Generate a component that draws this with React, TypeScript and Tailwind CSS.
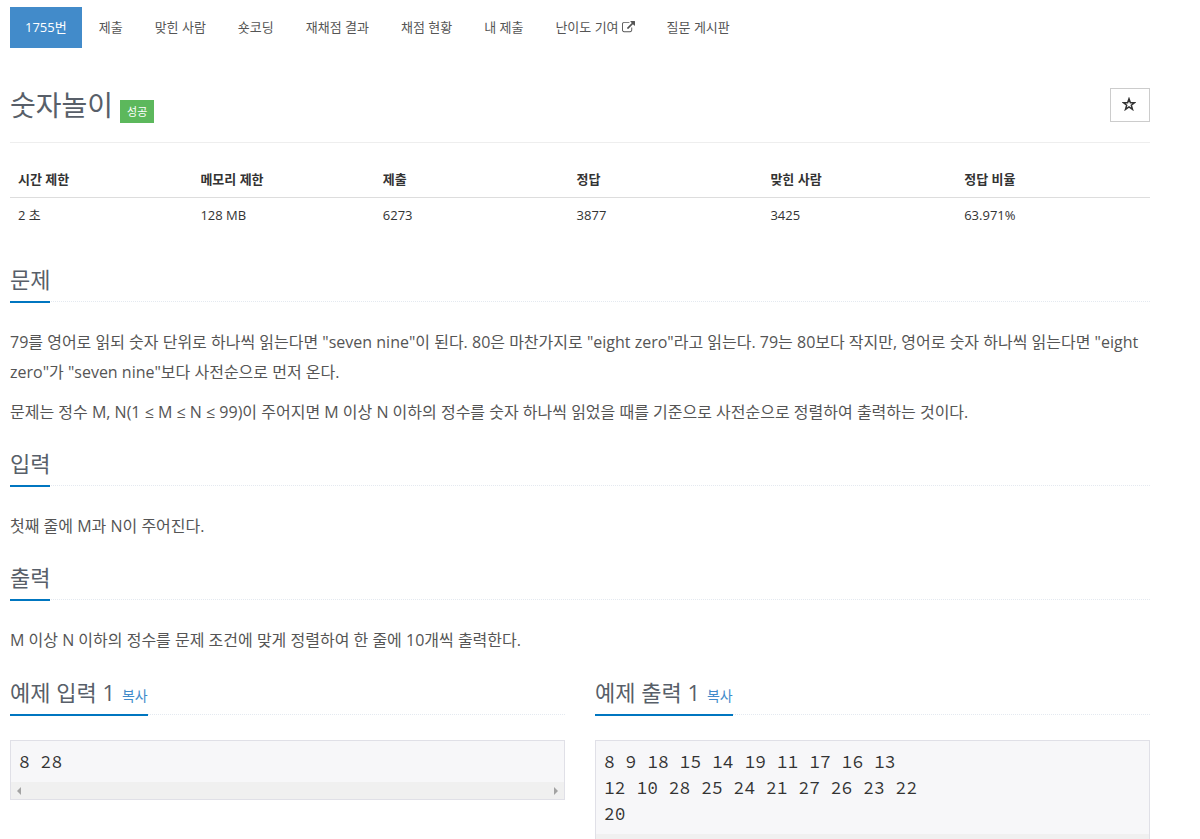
import type { ReactNode } from 'react';

const menus = ['제출', '맞힌 사람', '숏코딩', '재채점 결과', '채점 현황', '내 제출', '난이도 기여', '질문 게시판'];

const info = [
  { label: '시간 제한', value: '2 초', width: 'w-[16%]' },
  { label: '메모리 제한', value: '128 MB', width: 'w-[16%]' },
  { label: '제출', value: '6273', width: 'w-[17%]' },
  { label: '정답', value: '3877', width: 'w-[17%]' },
  { label: '맞힌 사람', value: '3425', width: 'w-[17%]' },
  { label: '정답 비율', value: '63.971%', width: 'w-[17%]' },
];

function ExternalIcon() {
  return (
    <svg viewBox="0 0 1792 1792" className="inline-block size-[13px] ml-[3px] -mt-[2px]" fill="currentColor" aria-hidden="true">
      <path d="M1408 928v320q0 119-84.500 203.500t-203.500 84.500h-832q-119 0-203.500-84.500t-84.500-203.500v-832q0-119 84.500-203.500t203.500-84.500h704q14 0 23 9t9 23v64q0 14-9 23t-23 9h-704q-66 0-113 47t-47 113v832q0 66 47 113t113 47h832q66 0 113-47t47-113v-320q0-14 9-23t23-9h64q14 0 23 9t9 23zm384-864v512q0 26-19 45t-45 19-45-19l-176-176-652 652q-10 10-23 10t-23-10l-114-114q-10-10-10-23t10-23l652-652-176-176q-19-19-19-45t19-45 45-19h512q26 0 45 19t19 45z" />
    </svg>
  );
}

function Headline({ children }: { children: ReactNode }) {
  return (
    <div className="flex mt-5 mb-[25px] border-b border-dotted border-[#e4e9f0]">
      <div className="flex items-baseline -mb-[2px] pb-[5px] border-b-2 border-[#0076c0] text-[22px] leading-[33px] text-[#585f69]">
        {children}
      </div>
    </div>
  );
}

function Section({ title, children }: { title: string; children: ReactNode }) {
  return (
    <section>
      <Headline>
        <h2>{title}</h2>
      </Headline>
      <div className="flex flex-col gap-2.5 text-base leading-[30px] text-[#555]">{children}</div>
    </section>
  );
}

function Sample({ title, data }: { title: string; data: string }) {
  return (
    <section className="flex-1 min-w-0">
      <Headline>
        <h2>{title}</h2>
        <button type="button" className="ml-[7px] text-sm text-[#428bca] cursor-pointer">복사</button>
      </Headline>
      <div className="border border-[#e0e0e7] bg-[#f7f7f9]">
        <pre className="px-2 pt-2 pb-[7px] font-['Source_Code_Pro','Liberation_Mono',monospace] text-lg leading-[26px] text-[#333] overflow-hidden">{data}</pre>
        <div className="flex items-center justify-between h-[17px] px-[6px] bg-[#f0f0f0] text-[#a3a3a3]">
          <svg viewBox="0 0 4 8" className="w-1 h-2" fill="currentColor" aria-hidden="true"><path d="M4 0v8L0 4z" /></svg>
          <svg viewBox="0 0 4 8" className="w-1 h-2" fill="currentColor" aria-hidden="true"><path d="M0 0v8l4-4z" /></svg>
        </div>
      </div>
    </section>
  );
}

export default function App() {
  return (
    <div className="pt-[7px] pl-2.5 pr-[50px] pb-10 bg-white font-['Open_Sans','Noto_Sans_CJK_KR',sans-serif] text-[13px] leading-[19px] text-[#333]">
      <nav>
        <ul className="flex flex-wrap gap-0.5 text-[#555] leading-[21px]">
          <li>
            <a href="#problem" className="block px-[15px] py-2.5 bg-[#428bca] text-white">1755번</a>
          </li>
          {menus.map((menu) => (
            <li key={menu}>
              <a href="#menu" className="block px-[15px] py-2.5">
                {menu}
                {menu === '난이도 기여' && <ExternalIcon />}
              </a>
            </li>
          ))}
        </ul>
      </nav>

      <header className="flex items-start justify-between mt-10 pb-[19px] border-b border-[#eee]">
        <div className="flex items-end gap-[7px]">
          <h1 className="pb-px text-[28px] leading-[34px] text-[#585f69]">숫자놀이</h1>
          <span className="px-[7px] py-[3px] bg-[#5cb85c] text-[11px] leading-[17px] text-white">성공</span>
        </div>
        <button type="button" aria-label="즐겨찾기" className="flex items-center justify-center w-10 h-[34px] pr-0.5 pb-0.5 border border-[#ccc] bg-white cursor-pointer">
          <svg viewBox="0 0 14 14" className="size-[14px]" fill="none" stroke="#333" strokeWidth="1.5" aria-hidden="true">
            <path d="M7 1.800l1.400 4h4.100L9.300 8.200l1.200 4.200L7 9.900l-3.500 2.500 1.200-4.200L1.500 5.800h4.100z" />
          </svg>
        </button>
      </header>

      <table className="w-full table-fixed mt-[19px]">
        <thead>
          <tr className="border-b border-[#ddd]">
            {info.map(({ label, width }) => (
              <th key={label} scope="col" className={`${width} p-2 text-left font-bold`}>{label}</th>
            ))}
          </tr>
        </thead>
        <tbody>
          <tr>
            {info.map(({ label, value }) => (
              <td key={label} className="p-2">{value}</td>
            ))}
          </tr>
        </tbody>
      </table>

      <main className="mt-[30px]">
        <Section title="문제">
          <p>
            79를 영어로 읽되 숫자 단위로 하나씩 읽는다면 "seven nine"이 된다. 80은 마찬가지로 "eight zero"라고 읽는다. 79는 80보다 작지만, 영어로 숫자 하나씩 읽는다면 "eight zero"가 "seven nine"보다 사전순으로 먼저 온다.
          </p>
          <p>
            문제는 정수 M, N(1 ≤ M ≤ N ≤ 99)이 주어지면 M 이상 N 이하의 정수를 숫자 하나씩 읽었을 때를 기준으로 사전순으로 정렬하여 출력하는 것이다.
          </p>
        </Section>
        <Section title="입력">
          <p>첫째 줄에 M과 N이 주어진다.</p>
        </Section>
        <Section title="출력">
          <p>M 이상 N 이하의 정수를 문제 조건에 맞게 정렬하여 한 줄에 10개씩 출력한다.</p>
        </Section>
        <div className="flex items-start gap-[30px] pt-px">
          <Sample title="예제 입력 1" data="8 28" />
          <Sample title="예제 출력 1" data={'8 9 18 15 14 19 11 17 16 13\n12 10 28 25 24 21 27 26 23 22\n20'} />
        </div>
      </main>
    </div>
  );
}
